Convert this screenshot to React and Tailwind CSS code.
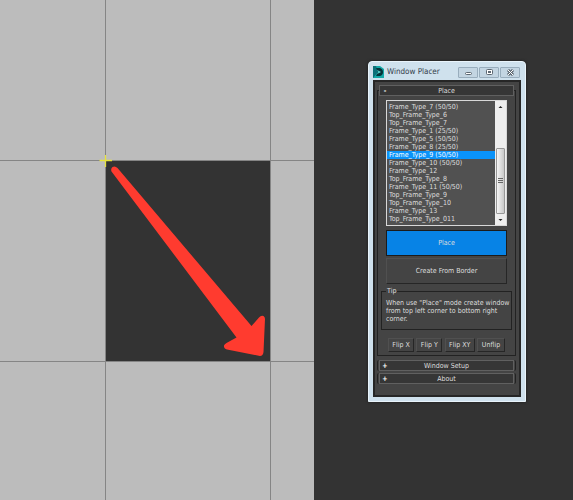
import React from "react";

const frames = [
  "Frame_Type_7 (50/50)",
  "Top_Frame_Type_6",
  "Top_Frame_Type_7",
  "Frame_Type_1 (25/50)",
  "Frame_Type_5 (50/50)",
  "Frame_Type_8 (25/50)",
  "Frame_Type_9 (50/50)",
  "Frame_Type_10 (50/50)",
  "Frame_Type_12",
  "Top_Frame_Type_8",
  "Frame_Type_11 (50/50)",
  "Top_Frame_Type_9",
  "Top_Frame_Type_10",
  "Frame_Type_13",
  "Top_Frame_Type_011",
];

function Viewport() {
  return (
    <section className="relative grid grid-cols-[106px_165px_1fr] grid-rows-[161px_201px_1fr] bg-[#bcbcbc]">
      <div className="border-r border-b border-[#858585]" />
      <div className="border-r border-b border-[#858585]" />
      <div className="border-b border-[#858585]" />
      <div className="border-r border-b border-[#858585]" />
      <div className="border-r border-b border-[#858585] bg-[#333333]" />
      <div className="border-b border-[#858585]" />
      <div className="border-r border-[#858585]" />
      <div className="border-r border-[#858585]" />
      <div />
      <svg
        className="absolute top-0 left-0"
        width="313"
        height="400"
        viewBox="0 0 313 400"
        aria-hidden="true"
      >
        <path d="M99.500 160.500H112M105.500 155V167" stroke="#e6e23c" strokeWidth="1.300" />
        <path
          d="M117.500 168 L251.500 326 L259 317.500 Q261 315 263.500 316 Q265 317 265 319 L263.500 352 Q263 356 260 356 L227 349.500 Q223.500 348.500 224 345.500 Q224.500 344 226.500 343 L236.500 337.500 L111.500 171.500 Q110.500 168.500 112.500 167 Q115 165.500 117.500 168 Z"
          fill="#ff3b2f"
        />
      </svg>
    </section>
  );
}

function Logo() {
  return (
    <svg width="11" height="12" viewBox="0 0 11 12" aria-hidden="true">
      <path d="M0 0H7L11 3V12H0Z" fill="#14a9a8" />
      <path d="M0 0H3L5 6L0 12Z" fill="#0c7078" />
      <path d="M3 2H7Q10 3 10 6Q10 9 7 10H3L5 6Z" fill="#04333a" />
      <path d="M4 4L8 6L4 8L5.500 6Z" fill="#5fe6de" />
    </svg>
  );
}

function TitleButton({ label, children }) {
  return (
    <button
      type="button"
      aria-label={label}
      className="flex h-[11px] w-[20px] items-center justify-center rounded-[1px] border border-[#98adbd] bg-[#c3d5e2]"
    >
      <svg width="9" height="7" viewBox="0 0 9 7" fill="none" stroke="#5d6872">
        {children}
      </svg>
    </button>
  );
}

function RolloutHeader({ sign, children }) {
  return (
    <button
      type="button"
      className="relative grid h-[11px] w-full grid-cols-[10px_1fr_10px] items-center border border-[#606060] bg-[#363636] leading-[8px]"
    >
      <span className="font-bold text-white">{sign}</span>
      <span>{children}</span>
    </button>
  );
}

function Closed({ children }) {
  return (
    <div className="rounded-[2px] border-x border-[#222222] px-px">
      <RolloutHeader sign="+">{children}</RolloutHeader>
    </div>
  );
}

const raised =
  "border border-t-[#505050] border-l-[#505050] border-r-[#262626] border-b-[#262626]";

function FrameList() {
  return (
    <div className="flex h-[126px] border border-[#d8d8d8] bg-[#515151]">
      <select
        size={15}
        defaultValue="Frame_Type_9 (50/50)"
        aria-label="Frame type"
        className="min-w-0 flex-1 appearance-none overflow-hidden border-0 bg-[#515151] p-0 pt-[2px] text-[7px] leading-[8px] text-[#dedede] outline-none"
      >
        {frames.map((f) => (
          <option
            key={f}
            value={f}
            className="h-[8px] min-h-0 p-0 pl-[2px] leading-[8px] checked:bg-[#0a93fa] checked:bg-linear-to-r checked:from-[#0a93fa] checked:to-[#0a93fa] checked:text-white"
          >
            {f}
          </option>
        ))}
      </select>
      <div className="flex w-[11px] flex-col items-center bg-[#eeeeee]" aria-hidden="true">
        <svg width="11" height="11" viewBox="0 0 11 11">
          <path d="M3.500 7L5.500 5L7.500 7Z" fill="#222222" />
        </svg>
        <div className="mt-[36px] flex h-[66px] w-[9px] items-center justify-center rounded-[1px] border border-[#989898] bg-linear-to-r from-[#f5f5f5] to-[#c9c9c9]">
          <svg width="5" height="6" viewBox="0 0 5 6" stroke="#666666">
            <path d="M0 0.500H5M0 2.500H5M0 4.500H5" />
          </svg>
        </div>
        <svg width="11" height="11" viewBox="0 0 11 11">
          <path d="M3.500 5L5.500 7L7.500 5Z" fill="#222222" />
        </svg>
      </div>
    </div>
  );
}

function PlacerWindow() {
  return (
    <section className="w-[158px] rounded-t-[4px] border border-[#e9f4fb] bg-[#cfe1ed] px-[4px] pb-[4px] shadow-[0_0_3px_#1c1c1c]">
      <header className="flex h-[18px] items-center pt-[2px]">
        <Logo />
        <h1 className="ml-[3px] flex-1 text-[8px] leading-[10px] whitespace-nowrap text-[#33404c]">
          Window Placer
        </h1>
        <div className="flex gap-px pr-px">
          <TitleButton label="Minimize">
            <rect x="1.500" y="3.500" width="6" height="2" rx="1" fill="#ffffff" />
          </TitleButton>
          <TitleButton label="Maximize">
            <rect x="1.500" y="0.500" width="6" height="5" rx="1" fill="#ffffff" />
            <rect x="3.500" y="2.500" width="2" height="1" />
          </TitleButton>
          <TitleButton label="Close">
            <path d="M2 1L7 6M7 1L2 6" strokeWidth="3" />
            <path d="M2 1L7 6M7 1L2 6" stroke="#ffffff" />
          </TitleButton>
        </div>
      </header>
      <div className="border-2 border-[#262626] bg-[#444444] pt-[3px] pr-[3px] pb-[11px] pl-[2px] text-center text-[7px] text-[#dedede]">
        <div className="px-[2px]">
          <RolloutHeader sign="-">Place</RolloutHeader>
        </div>
        <div className="-mt-[6px] border border-[#222222] px-[3px] pt-[9px] pb-[3px]">
          <div className="flex flex-col gap-[2px] px-[5px]">
            <FrameList />
            <button type="button" className="mt-[2px] h-[26px] border border-[#1b1b1b] bg-[#0783e6]">
              Place
            </button>
            <button type="button" className={`h-[26px] ${raised}`}>
              Create From Border
            </button>
          </div>
          <fieldset className="mt-[3px] h-[43px] min-w-0 border border-[#222222] px-[4px] text-left leading-[8px]">
            <legend className="px-px">Tip</legend>
            <p className="pt-[4px] whitespace-nowrap">
              When use "Place" mode create window
              <br />
              from top left corner to bottom right
              <br />
              corner.
            </p>
          </fieldset>
          <div className="mt-[8px] flex justify-between px-[7px]">
            <button type="button" className={`h-[14px] w-[26px] ${raised}`}>Flip X</button>
            <button type="button" className={`h-[14px] w-[26px] ${raised}`}>Flip Y</button>
            <button type="button" className={`h-[14px] w-[30px] ${raised}`}>Flip XY</button>
            <button type="button" className={`h-[14px] w-[28px] ${raised}`}>Unflip</button>
          </div>
        </div>
        <div className="mt-[4px] flex flex-col gap-[2px]">
          <Closed>Window Setup</Closed>
          <Closed>About</Closed>
        </div>
      </div>
    </section>
  );
}

export default function App() {
  return (
    <main className="grid min-h-screen grid-cols-[314px_1fr] bg-[#333333] font-['DejaVu_Sans_Condensed','DejaVu_Sans',sans-serif] [text-rendering:geometricPrecision] [&_button]:[text-rendering:inherit] [&_select]:[text-rendering:inherit]">
      <Viewport />
      <div className="flex items-start pt-[61px] pl-[54px]">
        <PlacerWindow />
      </div>
    </main>
  );
}
